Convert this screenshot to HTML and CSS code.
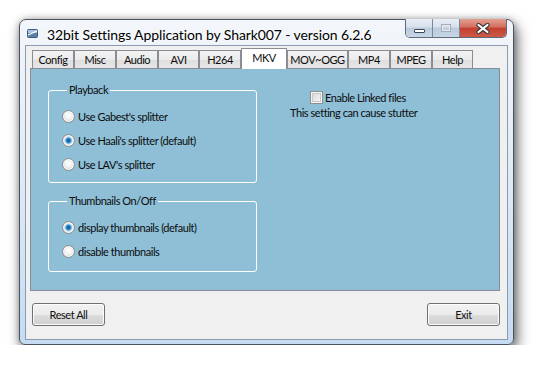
FILE: index.html
```html
<!DOCTYPE html>
<html lang="en">
<head>
    <meta charset="UTF-8">
    <title>32bit Settings Application</title>
    <link rel="stylesheet" href="styles.css">
</head>
<body>
    <div class="window">
        <div class="titlebar">
            <svg class="app-icon" width="11" height="9" viewBox="0 0 11 9">
                <rect x="0.5" y="0.5" width="10" height="8" rx="1" fill="#5b7fa6" stroke="#3d5a7a"/>
                <rect x="1" y="1" width="9" height="3" fill="#a9c4e0"/>
                <path d="M1 6 L10 2" stroke="#fff" stroke-width="1.3"/>
            </svg>
            <span class="title">32bit Settings Application by Shark007 - version 6.2.6</span>
            <div class="caption-buttons">
                <span class="cap cap-min"><i></i></span>
                <span class="cap cap-max"><i></i></span>
                <span class="cap cap-close">
                    <svg width="14" height="11" viewBox="0 0 14 11">
                        <path d="M2.5 2 L11.5 9 M11.5 2 L2.5 9" stroke="#3a3a3a" stroke-width="4.2" stroke-linecap="round"/>
                        <path d="M2.5 2 L11.5 9 M11.5 2 L2.5 9" stroke="#fff" stroke-width="2.2" stroke-linecap="round"/>
                    </svg>
                </span>
            </div>
        </div>
        <div class="client">
            <div class="tabs">
                <span class="tab">Config</span>
                <span class="tab">Misc</span>
                <span class="tab">Audio</span>
                <span class="tab tab-narrow">AVI</span>
                <span class="tab">H264</span>
                <span class="tab tab-active">MKV</span>
                <span class="tab tab-wide">MOV~OGG</span>
                <span class="tab">MP4</span>
                <span class="tab">MPEG</span>
                <span class="tab tab-narrow">Help</span>
            </div>
            <div class="panel">
                <div class="col-left">
                    <fieldset class="group">
                        <legend>Playback</legend>
                        <label class="option"><span class="radio"></span>Use Gabest's splitter</label>
                        <label class="option"><span class="radio checked"></span>Use Haali's splitter (default)</label>
                        <label class="option"><span class="radio"></span>Use LAV's splitter</label>
                    </fieldset>
                    <fieldset class="group group-thumbs">
                        <legend>Thumbnails On/Off</legend>
                        <label class="option"><span class="radio checked"></span>display thumbnails (default)</label>
                        <label class="option"><span class="radio"></span>disable thumbnails</label>
                    </fieldset>
                </div>
                <div class="col-right">
                    <label class="check-row"><span class="checkbox"></span>Enable Linked files</label>
                    <div class="note">This setting can cause stutter</div>
                </div>
            </div>
            <div class="footer">
                <button class="btn">Reset All</button>
                <button class="btn">Exit</button>
            </div>
        </div>
    </div>
</body>
</html>
```

FILE: styles.css
```css
body {
    margin: 0;
    background: #fff;
    font-family: Lato, 'Open Sans', sans-serif;
    font-size: 11px;
    letter-spacing: -0.45px;
    color: #0c0c0c;
}
.window {
    box-sizing: border-box;
    width: 495px;
    height: 326px;
    margin: 19px 0 0 19px;
    padding: 0 5px 4px;
    border: 1px solid #4a5360;
    border-radius: 7px 7px 6px 6px;
    background: linear-gradient(180deg, #f3f6fa 0%, #e3ecf6 40%, #c5dbf2 100%);
    box-shadow: 3px 6px 14px rgba(0, 0, 0, 0.6), 0 0 6px rgba(0, 0, 0, 0.25);
    display: flex;
    flex-direction: column;
}
.titlebar {
    height: 25px;
    display: flex;
    align-items: flex-start;
    padding-left: 2px;
}
.app-icon {
    margin-top: 9px;
    flex-shrink: 0;
}
.title {
    margin-left: 9px;
    margin-top: 5px;
    font-size: 14px;
    line-height: 19px;
    letter-spacing: -0.1px;
    color: #000;
    white-space: nowrap;
    overflow: hidden;
    text-shadow: 0 0 6px #fff, 0 0 3px #fff;
}
.caption-buttons {
    flex-shrink: 0;
    margin-left: auto;
    margin-right: 1px;
    margin-top: -1px;
    display: flex;
    height: 18px;
    border: 1px solid #5d6b7c;
    border-top: none;
    border-radius: 0 0 5px 5px;
    overflow: hidden;
}
.cap {
    display: flex;
    align-items: center;
    justify-content: center;
    width: 26px;
    height: 18px;
    background: linear-gradient(180deg, #e9eef5 0%, #d7e0eb 45%, #bccbdc 50%, #c7d6e6 100%);
    border-right: 1px solid #7b8898;
}
.cap-min i {
    display: block;
    width: 9px;
    height: 2px;
    margin-top: 5px;
    background: #fff;
    border: 1px solid #3f4a58;
    border-radius: 1px;
}
.cap-max i {
    display: block;
    width: 8px;
    height: 6px;
    border: 1px solid #a3adba;
    box-shadow: inset 0 0 0 1px #e6ebf1;
}
.cap-close {
    width: 46px;
    border-right: none;
    background: linear-gradient(180deg, #e3a093 0%, #d46f5f 45%, #c2402f 50%, #cc5a48 100%);
}
.client {
    flex: 1;
    background: #f0f0f0;
    border: 1px solid #8a9bb0;
    display: flex;
    flex-direction: column;
}
.tabs {
    display: flex;
    align-items: flex-end;
    height: 20px;
    margin: 2px 0 0 6px;
    position: relative;
    z-index: 1;
}
.tab {
    box-sizing: border-box;
    width: 42px;
    height: 18px;
    border: 1px solid #898c95;
    border-bottom: none;
    background: linear-gradient(180deg, #f3f3f3 0%, #ebebeb 50%, #dedede 51%, #e6e6e6 100%);
    text-align: center;
    line-height: 17px;
    white-space: nowrap;
}
.tab-narrow { width: 41px; }
.tab-wide { width: 61px; }
.tab-active {
    width: 46px;
    height: 21px;
    margin-bottom: -1px;
    background: #fff;
    line-height: 18px;
}
.panel {
    box-sizing: border-box;
    width: 470px;
    height: 223px;
    margin-left: 4px;
    padding: 14px 0 0 17px;
    border: 1px solid #898c95;
    background: #8ebfd6;
    display: flex;
}
.col-left {
    display: flex;
    flex-direction: column;
    gap: 11px;
}
.group {
    box-sizing: border-box;
    width: 209px;
    height: 100px;
    margin: 0;
    padding: 7px 0 0 13px;
    border: 1px solid #fff;
    border-radius: 3px;
}
.group-thumbs { height: 78px; }
.group legend {
    margin-left: 5px;
    padding: 0 2px;
    line-height: 14px;
}
.option {
    display: flex;
    align-items: center;
    height: 24px;
}
.radio {
    box-sizing: border-box;
    width: 13px;
    height: 13px;
    margin-right: 3px;
    border: 1px solid #8e8f8f;
    border-radius: 50%;
    background: radial-gradient(circle at 50% 40%, #ffffff 0%, #f2f2f2 40%, #cfcfcf 100%);
    box-shadow: inset 0 0 0 1px #f4f4f4;
}
.radio.checked {
    background: radial-gradient(circle at 50% 50%, #1d5a8c 0%, #1f6fb0 22%, #6ec2f0 40%, #e8e8e8 48%, #d8d8d8 100%);
}
.col-right {
    margin-left: 33px;
    padding-top: 6px;
}
.check-row {
    display: flex;
    align-items: center;
    height: 16px;
    padding-left: 20px;
}
.checkbox {
    box-sizing: border-box;
    width: 13px;
    height: 13px;
    margin-right: 2px;
    border: 1px solid #8e8f8f;
    background: linear-gradient(135deg, #d4d4d4 0%, #f0f0f0 70%, #fbfbfb 100%);
    box-shadow: inset 0 0 0 1px #f4f4f4, inset 0 0 0 2px #c9c9c9;
}
.note {
    height: 16px;
    line-height: 16px;
}
.footer {
    display: flex;
    justify-content: space-between;
    margin-top: 12px;
    padding: 0 7px 0 6px;
}
.btn {
    width: 73px;
    height: 23px;
    padding: 0;
    font-family: inherit;
    font-size: 11px;
    letter-spacing: -0.45px;
    color: #111;
    border: 1px solid #707070;
    border-radius: 3px;
    background: linear-gradient(180deg, #f2f2f2 0%, #ebebeb 50%, #dddddd 51%, #cfcfcf 100%);
    box-shadow: inset 0 0 0 1px #fcfcfc;
}
```
